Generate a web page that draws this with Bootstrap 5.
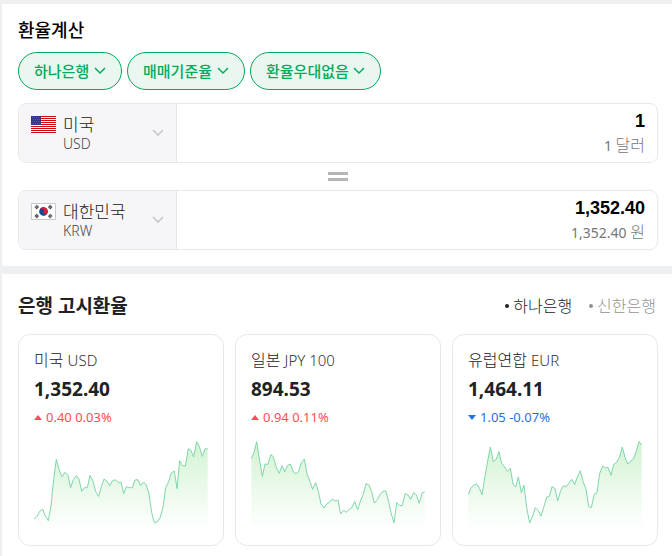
<!DOCTYPE html>
<html lang="ko">
<head>
<meta charset="utf-8">
<meta name="viewport" content="width=device-width, initial-scale=1">
<title>환율계산</title>
<link href="https://cdn.jsdelivr.net/npm/bootstrap@5.3.0/dist/css/bootstrap.min.css" rel="stylesheet">
<style>
body { font-family: "Noto Sans", "Noto Sans CJK KR", sans-serif; background: #eeeff1; color: #202124; padding: 4px 0 0 2px; }
.panel { background: #fff; padding: 16px 14px 16px 16px; }
.panel + .panel { margin-top: 8px; padding-top: 18px; padding-bottom: 10px; }
.calc-title { font-size: 18px; line-height: 20px; font-weight: 500; color: #000; margin-bottom: 12px; }
.pill { width: auto; height: 38px; padding: 0 31px 0 15px; border: 1px solid #03aa5a; border-radius: 19px; color: #03aa5a; font-size: 15px; font-weight: 500; line-height: 20px; background: #e9f7f0 url("data:image/svg+xml,%3Csvg xmlns='http://www.w3.org/2000/svg' viewBox='0 0 12 8'%3E%3Cpath d='M1 1l5 5 5-5' fill='none' stroke='%2303aa5a' stroke-width='1.5'/%3E%3C/svg%3E") no-repeat right 15px top 14px / 12px 8px; }
.pills { gap: 5px; margin-bottom: 13px; }
.money { height: 60px; border: 1px solid #e8e8e9; border-radius: 8px; overflow: hidden; }
.currency { width: 158px; flex: none; background: #f6f6f9; border-right: 1px solid #e8e8e9; padding: 9px 12px 8px; gap: 7px; }
.flag { width: 25px; height: 17px; margin-top: 3px; flex: none; }
.money select { height: 23px; padding: 0 24px 0 0; border: 0; font-size: 17px; line-height: 22px; font-weight: 300; color: #202124; background: none; }
.code { font-size: 14px; line-height: 15px; font-weight: 300; color: #444; }
.chev { width: 12px; height: 8px; right: 12px; top: 25px; pointer-events: none; }
.amount { padding: 6px 12px 6px; min-width: 0; }
.amount input { font: bold 18px/22px "Liberation Sans", sans-serif; color: #000; height: 23px; padding: 0; border: 0; text-align: right; background: none; }
.reading { font-size: 14px; line-height: 24px; color: #777; }
.reading span { font-size: 16px; font-weight: 300; }
.equals { width: 20px; height: 9px; margin: 9px auto; border: solid #b5b5b5; border-width: 3px 0; }
.rate-title { font-size: 19px; line-height: 28px; font-weight: 700; margin: 0; }
.banks { gap: 17px; padding-right: 2px; }
.bank { font-size: 16px; line-height: 20px; font-weight: 300; color: #202124; text-decoration: none; gap: 4px; }
.bank.off { color: #929294; }
.bank::before { content: ""; width: 4px; height: 4px; border-radius: 50%; background: currentColor; }
.rates { gap: 11px; margin-top: 14px; }
.rate { flex: 1 1 0; min-width: 0; border: 1px solid #e8e8e9; border-radius: 12px; padding: 14px 15px; }
.rate h3 { font-size: 16px; line-height: 22px; font-weight: 300; margin: 0; }
.rate h3 span { font-size: 15px; color: #333; }
.price { font-size: 19px; line-height: 28px; font-weight: 700; margin-top: 4px; }
.change { font-size: 13px; line-height: 20px; gap: 4px; margin-top: 4px; }
.change svg { width: 8px; height: 5px; fill: currentColor; }
.up { color: #ff4d52; }
.down { color: #1f6fe8; }
.chart { display: block; width: 100%; height: 90px; margin-top: 14px; }
.chart polygon { fill: url(#fade); }
.chart polyline { fill: none; stroke: #7fd6ab; stroke-width: 1; vector-effect: non-scaling-stroke; }
</style>
</head>
<body>
<svg width="0" height="0" class="position-absolute" aria-hidden="true"><defs><linearGradient id="fade" gradientUnits="userSpaceOnUse" x1="0" y1="47" x2="0" y2="314"><stop offset="0" stop-color="#d2f3d2"/><stop offset="1" stop-color="#fff"/></linearGradient></defs></svg>
<main>
<section class="panel">
  <h1 class="calc-title">환율계산</h1>
  <div class="pills d-flex flex-wrap">
    <select class="form-select pill" aria-label="은행"><option>하나은행</option></select>
    <select class="form-select pill" aria-label="기준"><option>매매기준율</option></select>
    <select class="form-select pill" aria-label="우대"><option>환율우대없음</option></select>
  </div>
  <div class="money d-flex">
    <div class="currency d-flex position-relative">
      <svg class="flag" viewBox="0 0 25 17" shape-rendering="crispEdges" aria-hidden="true"><path fill="#fff" d="M0 0h25v17H0z"/><path stroke="#cc0a14" d="M0 .5h25M0 2.5h25M0 4.5h25M0 6.5h25M0 8.5h25M0 10.5h25M0 12.5h25M0 14.5h25M0 16.5h25"/><path fill="#34348c" d="M0 0h10v9H0z"/><path stroke="#5a5aa6" stroke-dasharray="1 1" d="M1 1.5h8M2 3.5h7M1 5.5h8M2 7.5h7"/></svg>
      <div class="flex-grow-1"><select class="form-select" aria-label="보내는 통화"><option>미국</option></select><div class="code">USD</div></div>
      <svg class="chev position-absolute" viewBox="0 0 12 8" aria-hidden="true"><path d="M1 1l5 5 5-5" fill="none" stroke="#c8c8ca" stroke-width="1.7"/></svg>
    </div>
    <div class="amount flex-grow-1 text-end"><input class="form-control" aria-label="달러 금액" value="1"><div class="reading">1 <span>달러</span></div></div>
  </div>
  <div class="equals"></div>
  <div class="money d-flex">
    <div class="currency d-flex position-relative">
      <svg class="flag" viewBox="0 0 25 17" aria-hidden="true"><path fill="#fff" stroke="#c9c9c9" d="M.5.5h24v16H.5z"/><g transform="rotate(20 12.5 8.5)"><circle cx="12.5" cy="8.5" r="4.3" fill="#0f4595"/><path fill="#d4203a" d="M8.2 8.5a4.3 4.3 0 0 1 8.6 0 2.15 2.15 0 0 1-4.3 0 2.15 2.15 0 0 0-4.3 0"/></g><g stroke="#444" stroke-width="3.4" stroke-dasharray="1 .25"><path d="M4.6 5.3l2.4-2.4M18 2.9l2.4 2.4M4.6 11.9L7 14.3M18 14.3l2.4-2.4"/></g></svg>
      <div class="flex-grow-1"><select class="form-select" aria-label="받는 통화"><option>대한민국</option></select><div class="code">KRW</div></div>
      <svg class="chev position-absolute" viewBox="0 0 12 8" aria-hidden="true"><path d="M1 1l5 5 5-5" fill="none" stroke="#c8c8ca" stroke-width="1.7"/></svg>
    </div>
    <div class="amount flex-grow-1 text-end"><input class="form-control" aria-label="원 금액" value="1,352.40"><div class="reading">1,352.40 <span>원</span></div></div>
  </div>
</section>
<section class="panel">
  <div class="d-flex justify-content-between align-items-center">
    <h2 class="rate-title">은행 고시환율</h2>
    <nav class="banks d-flex" aria-label="은행 선택"><a href="#" class="bank d-flex align-items-center">하나은행</a><a href="#" class="bank off d-flex align-items-center">신한은행</a></nav>
  </div>
  <div class="rates d-flex">
    <article class="rate">
      <h3>미국 <span>USD</span></h3>
      <div class="price">1,352.40</div>
      <div class="change up d-flex align-items-center"><svg viewBox="0 0 8 5" aria-hidden="true"><path d="M0 5l4-5 4 5z"/></svg>0.40 0.03%</div>
      <svg class="chart" viewBox="72 47 522 270" preserveAspectRatio="none" aria-hidden="true">
        <polygon points="73,281 81,273 89,258 98,252 106,272 115,286 123,242 131,162 139,102 148,135 156,154 165,141 174,150 182,187 190,163 199,151 207,161 215,198 223,187 232,187 240,150 249,167 257,199 266,213 274,184 282,161 291,168 299,181 307,167 316,163 325,172 333,170 341,205 349,184 358,187 367,187 375,164 383,163 392,181 401,170 409,179 417,206 425,262 433,292 442,290 451,275 459,247 467,187 476,169 484,143 493,137 501,190 509,106 517,121 526,122 535,70 543,75 551,95 560,49 568,63 577,93 585,71 593,70 593,317 73,317"/>
        <polyline points="73,281 81,273 89,258 98,252 106,272 115,286 123,242 131,162 139,102 148,135 156,154 165,141 174,150 182,187 190,163 199,151 207,161 215,198 223,187 232,187 240,150 249,167 257,199 266,213 274,184 282,161 291,168 299,181 307,167 316,163 325,172 333,170 341,205 349,184 358,187 367,187 375,164 383,163 392,181 401,170 409,179 417,206 425,262 433,292 442,290 451,275 459,247 467,187 476,169 484,143 493,137 501,190 509,106 517,121 526,122 535,70 543,75 551,95 560,49 568,63 577,93 585,71 593,70"/>
      </svg>
    </article>
    <article class="rate">
      <h3>일본 <span>JPY 100</span></h3>
      <div class="price">894.53</div>
      <div class="change up d-flex align-items-center"><svg viewBox="0 0 8 5" aria-hidden="true"><path d="M0 5l4-5 4 5z"/></svg>0.94 0.11%</div>
      <svg class="chart" viewBox="69 47 522 270" preserveAspectRatio="none" aria-hidden="true">
        <polygon points="70,100 78,82 86,49 95,106 103,153 111,116 120,117 128,88 136,94 145,127 154,144 162,121 170,139 178,121 187,116 196,140 204,145 212,138 220,112 229,101 237,146 246,169 254,192 263,172 271,198 279,236 288,248 296,236 305,231 313,221 321,227 330,225 338,266 347,255 355,261 363,252 372,246 380,228 389,253 397,228 406,207 414,175 423,179 431,199 439,233 448,223 456,208 464,199 473,196 481,225 489,262 498,293 506,232 514,241 523,241 531,205 540,209 548,222 557,202 565,208 574,234 582,203 590,199 590,317 70,317"/>
        <polyline points="70,100 78,82 86,49 95,106 103,153 111,116 120,117 128,88 136,94 145,127 154,144 162,121 170,139 178,121 187,116 196,140 204,145 212,138 220,112 229,101 237,146 246,169 254,192 263,172 271,198 279,236 288,248 296,236 305,231 313,221 321,227 330,225 338,266 347,255 355,261 363,252 372,246 380,228 389,253 397,228 406,207 414,175 423,179 431,199 439,233 448,223 456,208 464,199 473,196 481,225 489,262 498,293 506,232 514,241 523,241 531,205 540,209 548,222 557,202 565,208 574,234 582,203 590,199"/>
      </svg>
    </article>
    <article class="rate">
      <h3>유럽연합 <span>EUR</span></h3>
      <div class="price">1,464.11</div>
      <div class="change down d-flex align-items-center"><svg viewBox="0 0 8 5" aria-hidden="true"><path d="M0 0h8L4 5z"/></svg>1.05 -0.07%</div>
      <svg class="chart" viewBox="69 47 522 270" preserveAspectRatio="none" aria-hidden="true">
        <polygon points="70,208 78,187 86,180 95,176 103,189 111,208 120,153 128,107 136,65 145,109 154,101 162,79 170,114 178,123 187,138 196,129 204,176 212,185 220,155 229,202 237,180 245,247 254,293 263,272 271,247 279,255 288,272 296,247 305,215 313,213 321,184 330,190 338,227 347,196 355,181 363,185 372,173 380,162 389,178 397,155 406,136 414,168 423,192 431,244 439,247 448,206 456,202 464,145 473,122 481,128 489,126 498,150 506,117 514,112 523,97 532,65 540,96 548,116 557,107 565,102 574,77 582,48 590,59 590,317 70,317"/>
        <polyline points="70,208 78,187 86,180 95,176 103,189 111,208 120,153 128,107 136,65 145,109 154,101 162,79 170,114 178,123 187,138 196,129 204,176 212,185 220,155 229,202 237,180 245,247 254,293 263,272 271,247 279,255 288,272 296,247 305,215 313,213 321,184 330,190 338,227 347,196 355,181 363,185 372,173 380,162 389,178 397,155 406,136 414,168 423,192 431,244 439,247 448,206 456,202 464,145 473,122 481,128 489,126 498,150 506,117 514,112 523,97 532,65 540,96 548,116 557,107 565,102 574,77 582,48 590,59"/>
      </svg>
    </article>
  </div>
</section>
</main>
<script src="https://cdn.jsdelivr.net/npm/bootstrap@5.3.0/dist/js/bootstrap.bundle.min.js"></script>
</body>
</html>
